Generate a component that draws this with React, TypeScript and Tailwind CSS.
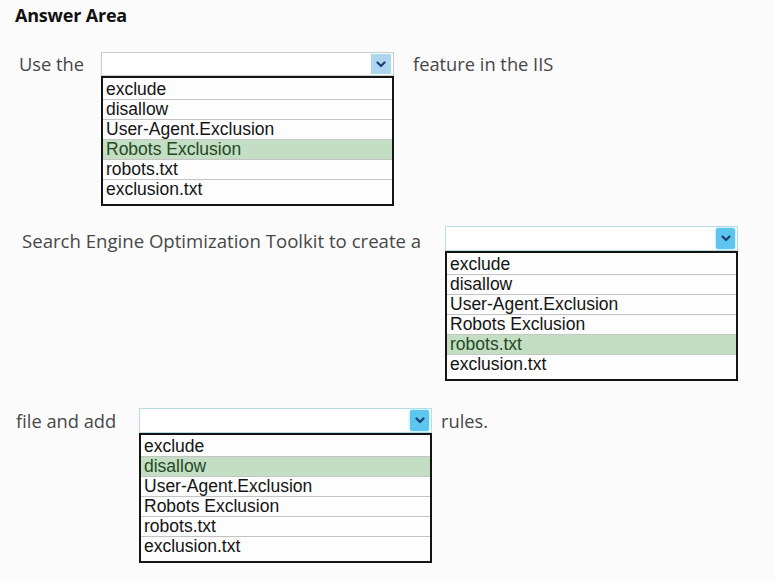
import React from "react";

const OPTIONS = [
  "exclude",
  "disallow",
  "User-Agent.Exclusion",
  "Robots Exclusion",
  "robots.txt",
  "exclusion.txt",
];

function Chevron() {
  return (
    <svg width="10" height="7" viewBox="0 0 10 7" fill="none">
      <path d="M1.5 1.5 L5 5 L8.5 1.5" stroke="#1d3f72" strokeWidth="2.2" strokeLinecap="round" strokeLinejoin="round" />
    </svg>
  );
}

function Dropdown({ selected, vivid }: { selected: number; vivid?: boolean }) {
  return (
    <div className="flex w-[293px] flex-col">
      <div
        className={
          vivid
            ? "flex h-[25px] items-center justify-end border border-[#b9dbe6] bg-white pr-[2px]"
            : "flex h-[24px] items-center justify-end border border-[#c6cdd4] bg-white pr-[2px]"
        }
      >
        <div
          className={
            vivid
              ? "flex h-[21px] w-[19px] items-center justify-center rounded-[2px] bg-[#5cc6ef] shadow-[0_0_3px_#7fd6f5]"
              : "flex h-[20px] w-[20px] items-center justify-center bg-[#acd5f0]"
          }
        >
          <Chevron />
        </div>
      </div>
      <div className="flex h-[130px] flex-col border-2 border-[#141414] bg-[#fdfdfd] pt-[2px]">
        {OPTIONS.map((o, i) => (
          <div
            key={o}
            className={
              (i === selected
                ? "bg-[#c3dec3] text-[#244a24] "
                : "text-[#141414] ") +
              (i < OPTIONS.length - 1 ? "border-b border-[#c4c4c4] " : "") +
              "flex h-[20px] items-center pl-[3px] text-[17.5px] leading-none"
            }
            style={{ fontFamily: '"Liberation Sans", Arial, sans-serif' }}
          >
            {o}
          </div>
        ))}
      </div>
    </div>
  );
}

export default function App() {
  const label = { fontFamily: '"Open Sans", "Noto Sans", sans-serif' };
  return (
    <div className="h-[581px] w-[775px] overflow-hidden bg-[#fbfbfc]">
      <div
        className="pl-[15px] pt-[3px] text-[18px] font-bold leading-[24px] tracking-[-0.2px] text-[#111]"
        style={label}
      >
        Answer Area
      </div>

      <div className="mt-[25px] flex items-start pl-[19px]">
        <div className="flex h-[24px] w-[82px] items-center text-[18.3px] text-[#474747]" style={label}>
          Use the
        </div>
        <Dropdown selected={3} />
        <div className="ml-[19px] flex h-[24px] items-center text-[18.3px] text-[#474747]" style={label}>
          feature in the IIS
        </div>
      </div>

      <div className="mt-[20px] flex items-start pl-[22px]">
        <div className="flex h-[25px] w-[423px] items-center pt-[5px] text-[18.6px] text-[#474747]" style={label}>
          Search Engine Optimization Toolkit to create a
        </div>
        <Dropdown selected={4} vivid />
      </div>

      <div className="mt-[27px] flex items-start pl-[16px]">
        <div className="flex h-[25px] w-[123px] items-center pt-[1px] text-[18.3px] text-[#474747]" style={label}>
          file and add
        </div>
        <Dropdown selected={1} vivid />
        <div className="ml-[9px] flex h-[25px] items-center pt-[1px] text-[18.3px] text-[#474747]" style={label}>
          rules.
        </div>
      </div>
    </div>
  );
}
